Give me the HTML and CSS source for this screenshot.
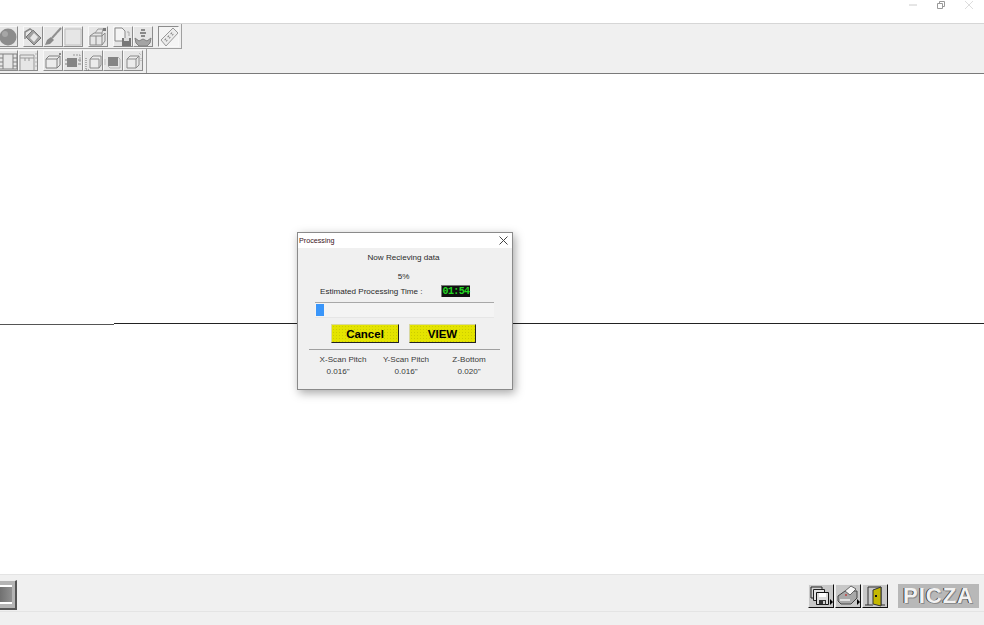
FILE: index.html
```html
<!DOCTYPE html>
<html lang="en">
<head>
<meta charset="UTF-8">
<title>Processing</title>
<link rel="stylesheet" href="styles.css">
</head>
<body>

<div class="app">
  <div class="titlebar">
    <svg class="win-icon" width="10" height="10" viewBox="0 0 10 10"><path d="M1 5h8" stroke="#ccc"/></svg>
    <svg class="win-icon" width="10" height="10" viewBox="0 0 10 10"><path d="M1.500 3.500h5v5h-5zM3.500 3V1.500h5v5H7" fill="none" stroke="#999"/></svg>
    <svg class="win-icon" width="10" height="10" viewBox="0 0 10 10"><path d="M1 1l8 8M9 1l-8 8" stroke="#ddd"/></svg>
  </div>

  <div class="toolbars">
    <div class="toolrow toolrow-top">
      <button class="tool">
        <svg width="20" height="20" viewBox="0 0 20 20"><circle cx="10" cy="10" r="8.500" fill="#8c8c8c"/><circle cx="7" cy="7" r="3" fill="#a6a6a6"/></svg>
      </button>
      <button class="tool tool-gap">
        <svg width="20" height="20" viewBox="0 0 20 20"><path d="M10 3l8 8-7 7-8-8z" fill="#a0a0a0" stroke="#777"/><path d="M2 12V5l5-3 3 2" fill="none" stroke="#8a8a8a" stroke-width="1.500"/><path d="M11 6l4 4-4 5-4-4z" fill="#e6e6e6"/></svg>
      </button>
      <button class="tool">
        <svg width="20" height="20" viewBox="0 0 20 20"><path d="M18 1L9 11" stroke="#909090" stroke-width="2"/><path d="M8 10l3 3-4 4-5 1 2-5z" fill="#8a8a8a"/><path d="M14 7l3-3" stroke="#c8c8c8"/></svg>
      </button>
      <button class="tool">
        <svg width="20" height="20" viewBox="0 0 20 20"><path d="M2 2h16v16H2z" fill="none" stroke="#c0c0c0"/></svg>
      </button>
      <button class="tool tool-gap">
        <svg width="20" height="20" viewBox="0 0 20 20"><path d="M2 9l4-3h8v12H2zM2 9h12M8 9v9M14 9l3-3V14l-3 4" fill="none" stroke="#8a8a8a"/><path d="M7 6l3-4h5l-1 4" fill="none" stroke="#999"/><path d="M15 1h3v3h-3z" fill="#7a7a7a"/></svg>
      </button>
      <button class="tool tool-gap">
        <svg width="20" height="20" viewBox="0 0 20 20"><path d="M2 1h7l3 3v10H2z" fill="#f4f4f4" stroke="#8a8a8a"/><path d="M9 11h9v8H9z" fill="#777"/><path d="M11 11h5v3h-5z" fill="#ddd"/><path d="M14 5h2M16 5v4" stroke="#aaa"/></svg>
      </button>
      <button class="tool">
        <svg width="20" height="20" viewBox="0 0 20 20"><path d="M8 2h4v2H8zM7 5h6v2H7zM8 8h4v2H8z" fill="#8a8a8a"/><path d="M2 11l4 3 4-2 4 2 4-3-1 5-3 3H6l-3-3z" fill="#a4a4a4" stroke="#808080"/></svg>
      </button>
      <button class="tool tool-on tool-gap">
        <svg width="20" height="20" viewBox="0 0 20 20"><path d="M14 1l5 5L7 19l-5-6z" fill="#ececec" stroke="#999"/><path d="M6 12l2 2M9 9l2 2M12 6l2 2" stroke="#808080" stroke-width="2" stroke-dasharray="1 1"/></svg>
      </button>
    </div>

    <div class="toolrow toolrow-bottom">
      <button class="tool">
        <svg width="20" height="20" viewBox="0 0 20 20"><path d="M1 3h18v15H1zM5 3v15M15 3v15M1 7h4M1 11h4M1 15h4M15 7h4M15 11h4M15 15h4" fill="none" stroke="#808080"/></svg>
      </button>
      <button class="tool">
        <svg width="20" height="20" viewBox="0 0 20 20"><path d="M2 19V4h14v15M2 7h14M7 7v3M11 7v3" fill="none" stroke="#999"/><path d="M18 2v14" stroke="#b4b4b4" stroke-dasharray="2 2"/></svg>
      </button>
      <button class="tool tool-gap">
        <svg width="20" height="20" viewBox="0 0 20 20"><path d="M3 8h11v9H3zM3 8l3-3h11l-3 3M14 17l3-3V5" fill="#ececec" stroke="#808080"/><path d="M16 2h2v2h-2z" fill="#888"/></svg>
      </button>
      <button class="tool">
        <svg width="20" height="20" viewBox="0 0 20 20"><path d="M2 9h2M2 13h2M15 9h3M15 13h3" stroke="#808080"/><path d="M4 7h10v9H4z" fill="#858585"/><path d="M10 4h7v8" fill="none" stroke="#999" stroke-dasharray="2 1"/></svg>
      </button>
      <button class="tool">
        <svg width="20" height="20" viewBox="0 0 20 20"><path d="M7 8h9v9H7zM7 8l3-3h8v9l-2 3" fill="#ececec" stroke="#8a8a8a"/><path d="M3 7v12M3 19h4" stroke="#777" stroke-dasharray="1 1"/></svg>
      </button>
      <button class="tool">
        <svg width="20" height="20" viewBox="0 0 20 20"><path d="M5 6h10v9H5z" fill="#858585"/><path d="M15 6l2 2v9H7l-2-2" fill="none" stroke="#b4b4b4"/><path d="M2 8v6" stroke="#c0c0c0"/></svg>
      </button>
      <button class="tool">
        <svg width="20" height="20" viewBox="0 0 20 20"><path d="M4 8h9v9H4zM4 8l3-3h9l-3 3M13 17l3-3V5" fill="#ececec" stroke="#8a8a8a"/><path d="M16 2l2 2M18 7v4" stroke="#a8a8a8" stroke-dasharray="1 1"/></svg>
      </button>
    </div>
  </div>

  <div class="canvas">
    <div class="axis">
      <div class="axis-left"></div>
      <div class="axis-right"></div>
    </div>
  </div>

  <div class="bottombar">
    <button class="big-square"><span class="big-square-inner"></span></button>
    <div class="bottom-right">
      <button class="cmd">
        <svg width="24" height="22" viewBox="0 0 24 22"><path d="M2 2h11v11H2z" fill="#d4d4d4" stroke="#222"/><path d="M4.500 4.500h11v11h-11z" fill="#e4e4e4" stroke="#222"/><path d="M7.500 7.500h12v12h-12z" fill="#ddd" stroke="#111"/><path d="M10 15h7v4.500h-7z" fill="#333"/><path d="M14 16h2v3h-2z" fill="#ccc"/><path d="M10 8h7v4h-7z" fill="#fff"/></svg>
        <span class="cmd-arrow"></span>
      </button>
      <button class="cmd">
        <svg width="24" height="22" viewBox="0 0 24 22"><path d="M2 11l7-5h12v7l-6 6H5l-3-3z" fill="#a8a8a8" stroke="#444"/><path d="M9 6l6-5 5 3-6 6z" fill="#f6f6f6" stroke="#666"/><path d="M4 14h10v2H4z" fill="#e0e0e0"/><path d="M9 9h2v2H9z" fill="#b85a5a"/></svg>
        <span class="cmd-arrow"></span>
      </button>
      <button class="cmd">
        <svg width="24" height="22" viewBox="0 0 24 22"><path d="M5 20V2h13v18" fill="none" stroke="#333"/><path d="M10 5l8-3v19l-8-2z" fill="#c4b800" stroke="#333"/><path d="M12 10h2v2h-2z" fill="#111"/><path d="M2 20h8M18 20h4" stroke="#333"/></svg>
      </button>
      <div class="logo">PICZA</div>
    </div>
  </div>
  <div class="statusbar"></div>

  <div class="dialog">
    <div class="dialog-title">
      <span>Processing</span>
      <svg width="9" height="9" viewBox="0 0 9 9"><path d="M.5.5l8 8M8.500.5l-8 8" stroke="#444"/></svg>
    </div>
    <div class="dialog-body">
      <p class="status-line">Now Recieving data</p>
      <p class="percent">5%</p>
      <div class="time-row">
        <span>Estimated Processing Time :</span>
        <span class="clock">01:54</span>
      </div>
      <div class="progress"><div class="progress-fill" style="width: 8px"></div></div>
      <div class="actions">
        <button class="yellow-btn btn-cancel">Cancel</button>
        <button class="yellow-btn btn-view">VIEW</button>
      </div>
      <hr class="divider">
      <div class="pitch-grid">
        <span>X-Scan Pitch</span><span>Y-Scan Pitch</span><span>Z-Bottom</span>
        <span class="pitch-x">0.016"</span><span>0.016"</span><span>0.020"</span>
      </div>
    </div>
  </div>
</div>

</body>
</html>
```

FILE: styles.css
```css
* {
  box-sizing: border-box;
}
html, body {
  margin: 0;
  height: 100%;
  overflow: hidden;
}
body {
  font-family: "Liberation Sans", sans-serif;
  background-color: #fff;
}
button {
  padding: 0;
  font-family: inherit;
}
.app {
  position: relative;
  display: flex;
  flex-direction: column;
  width: 984px;
  height: 625px;
}

/* top */
.titlebar {
  display: flex;
  justify-content: flex-end;
  align-items: flex-start;
  gap: 17px;
  height: 24px;
  padding: 0 10px 0 0;
  background-color: #fff;
  border-bottom: 1px solid #d6d6d6;
}
.win-icon {
  margin: 0 0 0 1px;
}
.toolbars {
  height: 50px;
  background-color: #f0f0f0;
  border-bottom: 1px solid #7a7a7a;
}
.toolrow {
  display: flex;
  margin-left: -2px;
  border-right: 1px solid #a0a0a0;
}
.toolrow-top {
  width: 184px;
  height: 25px;
  padding-top: 2px;
  border-bottom: 1px solid #a0a0a0;
}
.toolrow-bottom {
  width: 149px;
  height: 24px;
  padding-top: 1px;
}
.tool {
  display: flex;
  justify-content: center;
  align-items: center;
  width: 20px;
  height: 21px;
  background-color: #e6e6e6;
  border: 1px solid;
  border-color: #f8f8f8 #8c8c8c #8c8c8c #f8f8f8;
}
.tool svg {
  flex: none;
}
.tool-gap {
  margin-left: 5px;
}
.tool-on {
  background-color: #f4f4f4;
  border-color: #8c8c8c #f8f8f8 #f8f8f8 #8c8c8c;
  width: 21px;
}
.canvas {
  flex: 1;
  display: flex;
  align-items: center;
  background-color: #fff;
}
.axis {
  display: flex;
  align-items: flex-end;
  width: 100%;
  height: 2px;
}
.axis-left {
  width: 114px;
  height: 1px;
  background-color: #555;
}
.axis-right {
  flex: 1;
  height: 1px;
  margin-bottom: 1px;
  background-color: #222;
}

/* bottom */
.bottombar {
  display: flex;
  justify-content: space-between;
  align-items: center;
  height: 38px;
  background-color: #f0f0f0;
  border-top: 1px solid #e4e4e4;
  border-bottom: 1px solid #e4e4e4;
}
.big-square {
  width: 18px;
  height: 30px;
  margin-top: 3px;
  margin-left: -1px;
  padding: 4px 3px 4px 0;
  background-color: #b4b4b4;
  border: 0;
  border-right: 2px solid #555;
  border-bottom: 2px solid #555;
  border-top: 1px solid #eee;
}
.big-square-inner {
  display: block;
  height: 100%;
  background: linear-gradient(90deg, #6e6e6e, #909090);
  border-top: 2px solid #fff;
  border-bottom: 2px solid #fff;
}
.bottom-right {
  display: flex;
  align-items: center;
  padding-right: 5px;
  margin-top: 6px;
}
.cmd {
  position: relative;
  display: flex;
  justify-content: center;
  align-items: center;
  width: 26px;
  height: 24px;
  margin-right: 1px;
  background-color: #c8c8c8;
  border: 1px solid;
  border-color: #eee #111 #111 #eee;
}
.cmd svg {
  flex: none;
}
.cmd-arrow {
  position: absolute;
  right: 0;
  bottom: 2px;
  border-left: 3px solid #000;
  border-top: 3px solid transparent;
  border-bottom: 3px solid transparent;
}
.logo {
  width: 81px;
  height: 24px;
  margin-left: 9px;
  background-color: #b8b8b8;
  color: #f2f2f2;
  font-size: 22px;
  font-weight: bold;
  line-height: 24px;
  letter-spacing: 1px;
  text-align: center;
  white-space: nowrap;
  text-shadow: -1px 0 0 #3a3a3a, 1px 1px 0 #8c8c8c;
}
.statusbar {
  height: 13px;
  background-color: #f0f0f0;
}

/* dialog */
.dialog {
  position: absolute;
  left: 297px;
  top: 232px;
  width: 216px;
  height: 158px;
  background-color: #f0f0f0;
  border: 1px solid #8a8a8a;
  box-shadow: 2px 3px 9px rgba(0, 0, 0, 0.35);
  color: #2a2a2a;
  font-size: 8.100px;
}
.dialog-title {
  display: flex;
  justify-content: space-between;
  align-items: center;
  height: 15px;
  padding: 0 4px 0 1px;
  background-color: #fff;
  font-size: 7.200px;
  color: #3a1420;
}
.dialog-body {
  display: flex;
  flex-direction: column;
  align-items: center;
}
.status-line {
  margin: 5px 0 0 -3px;
  height: 10px;
  line-height: 10px;
}
.percent {
  margin: 9px 0 0 -3px;
  height: 10px;
  line-height: 10px;
}
.time-row {
  display: flex;
  justify-content: space-between;
  align-items: center;
  align-self: flex-start;
  width: 150px;
  height: 12px;
  margin: 3px 0 0 22px;
}
.clock {
  width: 29px;
  height: 12px;
  background-color: #101010;
  border-top: 1px solid #777;
  border-left: 1px solid #777;
  color: #22d822;
  font-family: "Liberation Mono", monospace;
  font-size: 10px;
  font-weight: bold;
  line-height: 11px;
  text-align: center;
  letter-spacing: -0.600px;
  white-space: nowrap;
}
.progress {
  align-self: flex-start;
  width: 179px;
  height: 16px;
  margin: 5px 0 0 17px;
  padding: 1px;
  background-color: #f4f4f4;
  border-top: 1px solid #a8a8a8;
  border-bottom: 1px solid #e6e6e6;
}
.progress-fill {
  height: 100%;
  background-color: #3a96fa;
}
.actions {
  display: flex;
  gap: 10px;
  margin: 6px 0 0 -3px;
}
.yellow-btn {
  height: 19px;
  background-color: #e4e400;
  border: 1px solid;
  border-color: #d8d8a0 #222 #222 #d8d8a0;
  background-image: radial-gradient(#cccc00 25%, transparent 30%);
  background-size: 3px 3px;
  color: #000;
  font-size: 11.500px;
  font-weight: bold;
}
.btn-cancel {
  width: 68px;
}
.btn-view {
  width: 67px;
}
.divider {
  width: 191px;
  margin: 6px 0 0 -2px;
  border: 0;
  border-top: 1px solid #a0a0a0;
}
.pitch-grid {
  display: grid;
  grid-template-columns: repeat(3, 63px);
  grid-auto-rows: 12px;
  margin: 4px 0 0 2px;
  color: #3a3a3a;
  line-height: 12px;
  text-align: center;
  white-space: nowrap;
}
.pitch-x {
  padding-right: 10px;
}
```
